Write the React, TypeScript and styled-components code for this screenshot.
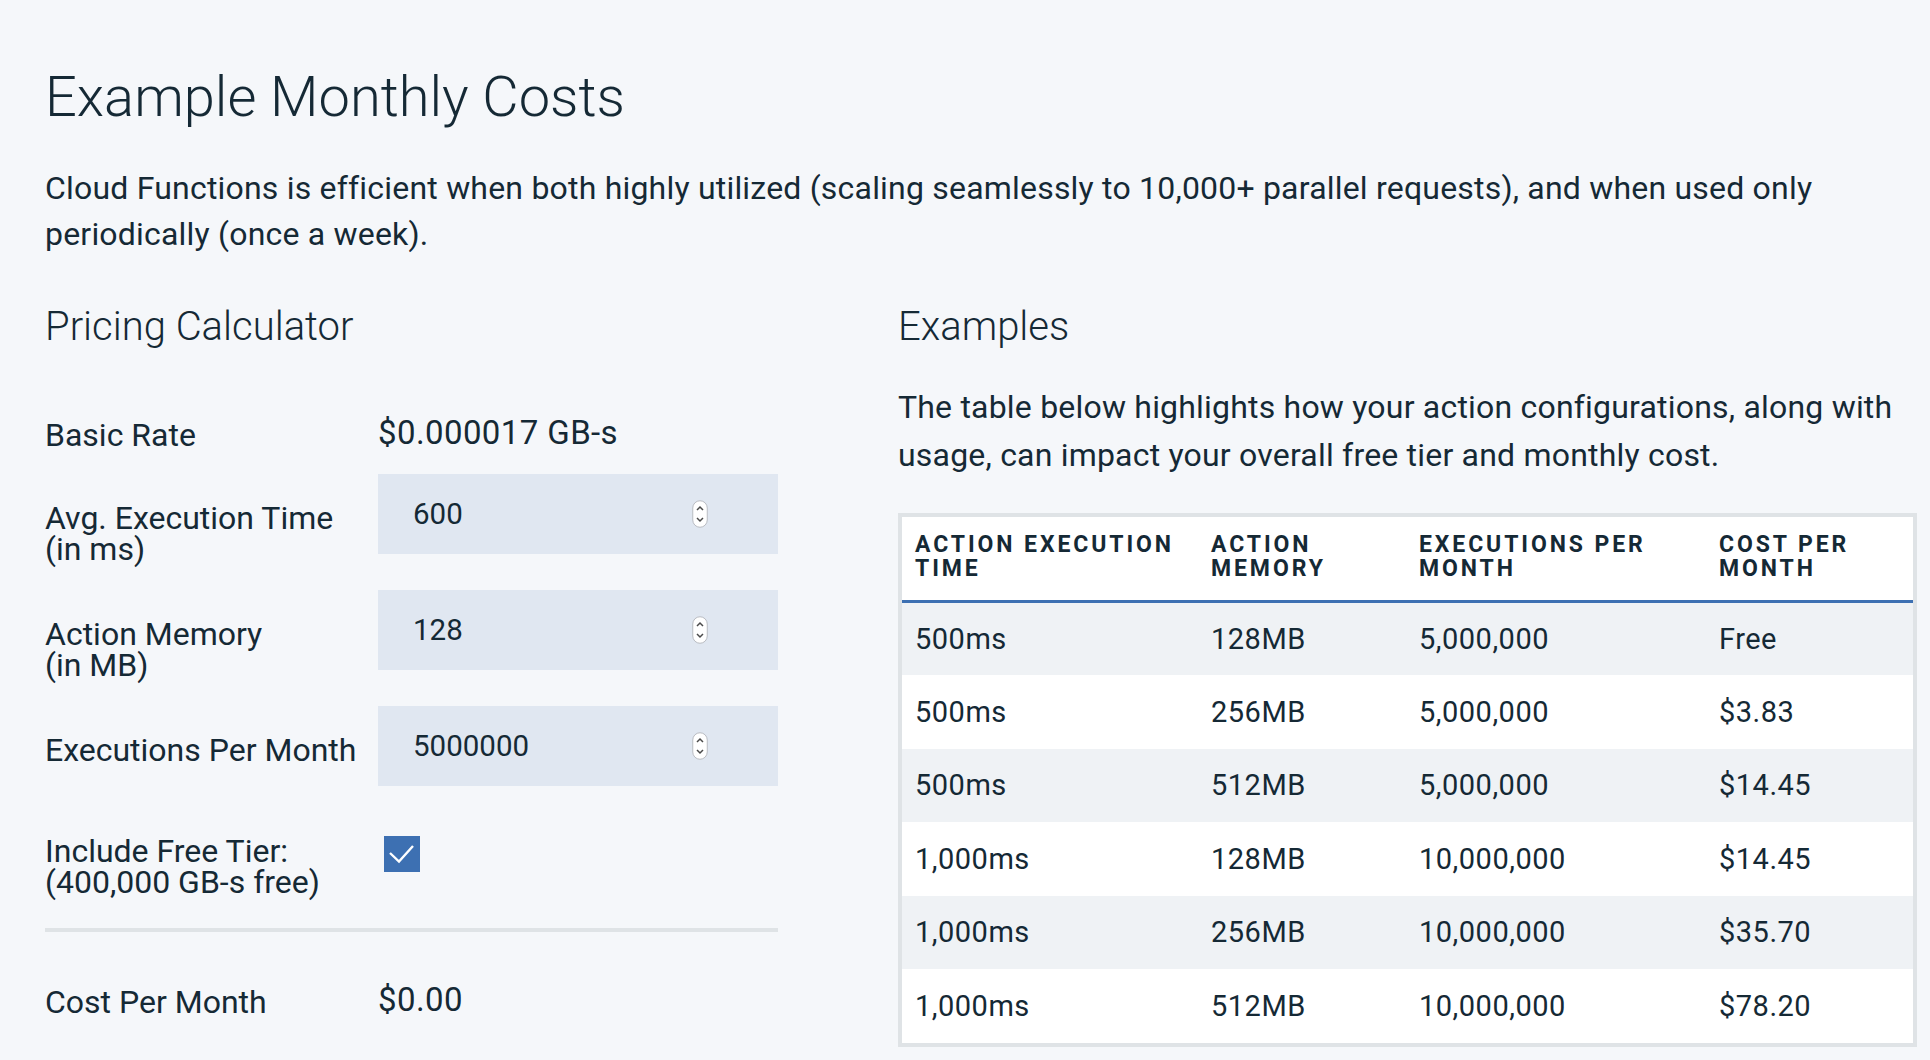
import styled, { createGlobalStyle } from 'styled-components';

const GlobalStyle = createGlobalStyle`
	html, body {
		margin: 0;
		padding: 0;
		background: #f5f7fa;
	}
	body {
		font-family: Roboto, 'Liberation Sans', sans-serif;
		color: #152935;
	}
`;

const Page = styled.main`
	box-sizing: border-box;
	width: 1930px;
	min-height: 1060px;
	padding: 65px 13px 0 45px;
`;

const Title = styled.h1`
	margin: 0;
	font-size: 56px;
	font-weight: 300;
	line-height: 64px;
`;

const Lead = styled.p`
	margin: 36px 0 0;
	font-size: 32px;
	line-height: 46px;
	letter-spacing: 0.2px;
	font-weight: 400;
`;

const Columns = styled.div`
	display: grid;
	grid-template-columns: 733px 1019px;
	column-gap: 120px;
	margin-top: 46px;
`;

const Section = styled.section`
	display: flex;
	flex-direction: column;
`;

const SectionTitle = styled.h2`
	margin: 0;
	font-size: 40px;
	font-weight: 300;
	line-height: 48px;
`;

const CalcRow = styled.div<{ $gap?: number; $h?: number }>`
	display: flex;
	align-items: flex-start;
	margin-top: ${({ $gap }) => $gap ?? 36}px;
	height: ${({ $h }) => ($h ? `${$h}px` : 'auto')};
`;

const Label = styled.div<{ $pad?: number }>`
	width: 333px;
	flex-shrink: 0;
	padding-top: ${({ $pad }) => $pad ?? 0}px;
	font-size: 32px;
	line-height: 31px;
`;

const Value = styled.div`
	font-size: 33px;
	line-height: 31px;
	letter-spacing: 0.4px;
	margin-top: -3px;
`;

const Field = styled.label`
	box-sizing: border-box;
	display: flex;
	align-items: center;
	width: 400px;
	height: 80px;
	flex-shrink: 0;
	padding: 0 70px 0 35px;
	background: #e0e7f1;
`;

const NumberInput = styled.input`
	flex: 1;
	min-width: 0;
	border: 0;
	padding: 0;
	background: transparent;
	font-family: Roboto, 'Liberation Sans', sans-serif;
	font-size: 29.5px;
	color: #152935;
	outline: none;
	-moz-appearance: textfield;

	&::-webkit-inner-spin-button,
	&::-webkit-outer-spin-button {
		-webkit-appearance: none;
		margin: 0;
	}
`;

const Spinner = () => (
	<svg width="16" height="28" viewBox="0 0 16 28">
		<rect x="0.75" y="0.75" width="14.5" height="26.5" rx="7.25" fill="#fff" stroke="#b9bcc2" strokeWidth="1" />
		<path d="M5 10 L8 7 L11 10" fill="none" stroke="#4a4a4a" strokeWidth="1.5" />
		<path d="M5 18 L8 21 L11 18" fill="none" stroke="#4a4a4a" strokeWidth="1.5" />
	</svg>
);

const Check = styled.span`
	display: block;
	width: 36px;
	height: 36px;
	margin-left: 6px;
	background: #3d70b2;
`;

const Divider = styled.hr`
	margin: 30px 0 0;
	border: 0;
	height: 4px;
	background: #dfe3e6;
`;

const Paragraph = styled.p`
	margin: 32px 0 0;
	font-size: 32px;
	line-height: 48px;
	letter-spacing: 0.2px;
`;

const TableFrame = styled.div`
	margin-top: 34px;
	border: 4px solid #dfe3e6;
	background: #fff;
`;

const Table = styled.table`
	width: 100%;
	border-collapse: collapse;
	table-layout: fixed;
`;

const Th = styled.th<{ $w: number }>`
	width: ${({ $w }) => $w}px;
	box-sizing: border-box;
	padding: 16px 13px 19px;
	text-align: left;
	vertical-align: top;
	font-size: 23px;
	font-weight: 700;
	line-height: 24px;
	letter-spacing: 2.9px;
	text-transform: uppercase;
	border-bottom: 3px solid #3d70b2;
`;

const Row = styled.tr`
	height: 73.5px;
	background: #fff;

	&:nth-child(odd) {
		background: #eff2f5;
	}
`;

const Td = styled.td`
	padding: 0 13px;
	font-size: 29px;
	letter-spacing: 0.5px;
	vertical-align: middle;
`;

const examples = [
	['500ms', '128MB', '5,000,000', 'Free'],
	['500ms', '256MB', '5,000,000', '$3.83'],
	['500ms', '512MB', '5,000,000', '$14.45'],
	['1,000ms', '128MB', '10,000,000', '$14.45'],
	['1,000ms', '256MB', '10,000,000', '$35.70'],
	['1,000ms', '512MB', '10,000,000', '$78.20'],
];

const inputs = [
	{ label: ['Avg. Execution Time', '(in ms)'], value: 600 },
	{ label: ['Action Memory', '(in MB)'], value: 128 },
	{ label: ['Executions Per Month'], value: 5000000 },
];

export default function App() {
	return (
		<>
			<GlobalStyle />
			<Page>
				<Title>Example Monthly Costs</Title>
				<Lead>
					Cloud Functions is efficient when both highly utilized (scaling seamlessly to 10,000+ parallel
					requests), and when used only periodically (once a week).
				</Lead>
				<Columns>
					<Section>
						<SectionTitle>Pricing Calculator</SectionTitle>
						<CalcRow $gap={69} $h={31}>
							<Label>Basic Rate</Label>
							<Value>$0.000017 GB-s</Value>
						</CalcRow>
						{inputs.map((item, i) => (
							<CalcRow key={item.value} $gap={i === 0 ? 23 : 36} $h={80}>
								<Label $pad={29}>
									{item.label.map((line) => (
										<div key={line}>{line}</div>
									))}
								</Label>
								<Field>
									<NumberInput type="number" defaultValue={item.value} />
									<Spinner />
								</Field>
							</CalcRow>
						))}
						<CalcRow $gap={50} $h={62}>
							<Label>
								<div>Include Free Tier:</div>
								<div>(400,000 GB-s free)</div>
							</Label>
							<Check>
								<svg width="36" height="36" viewBox="0 0 36 36">
									<path d="M6 17 L15 25.5 L29 10" fill="none" stroke="#fff" strokeWidth="2.4" />
								</svg>
							</Check>
						</CalcRow>
						<Divider />
						<CalcRow $gap={55} $h={31}>
							<Label>Cost Per Month</Label>
							<Value>$0.00</Value>
						</CalcRow>
					</Section>
					<Section>
						<SectionTitle>Examples</SectionTitle>
						<Paragraph>
							The table below highlights how your action configurations, along with usage, can impact your
							overall free tier and monthly cost.
						</Paragraph>
						<TableFrame>
							<Table>
								<thead>
									<tr>
										<Th $w={296}>Action Execution Time</Th>
										<Th $w={208}>Action Memory</Th>
										<Th $w={300}>Executions Per Month</Th>
										<Th $w={207}>Cost Per Month</Th>
									</tr>
								</thead>
								<tbody>
									{examples.map((row, i) => (
										<Row key={i}>
											{row.map((cell, j) => (
												<Td key={j}>{cell}</Td>
											))}
										</Row>
									))}
								</tbody>
							</Table>
						</TableFrame>
					</Section>
				</Columns>
			</Page>
		</>
	);
}
